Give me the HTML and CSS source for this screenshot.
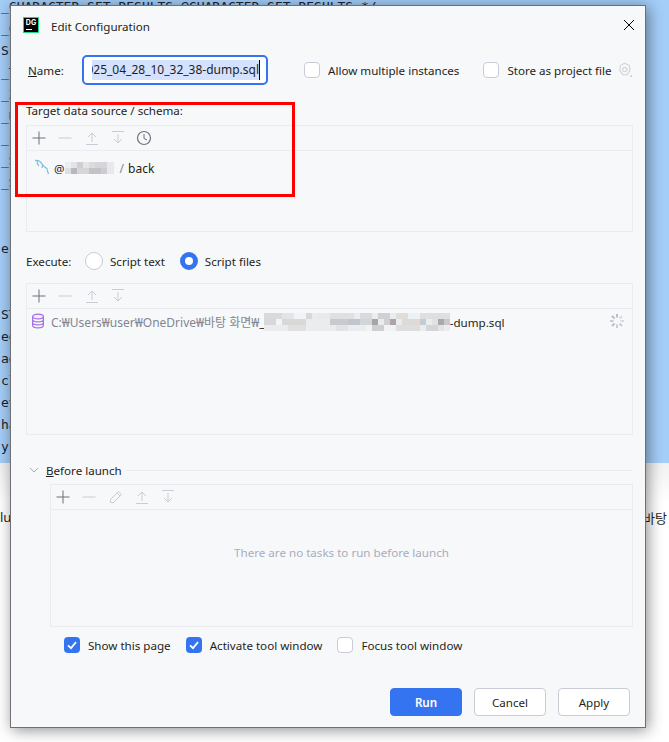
FILE: index.html
```html
<!DOCTYPE html>
<html lang="en">
<head>
<meta charset="utf-8">
<title>Edit Configuration</title>
<link rel="stylesheet" href="styles.css">
</head>
<body>
<svg class="defs" width="0" height="0" aria-hidden="true">
  <symbol id="i-plus" viewBox="0 0 16 16"><path d="M8 1.500v13M1.500 8h13" fill="none" stroke="#6c707e"/></symbol>
  <symbol id="i-minus" viewBox="0 0 16 16"><path d="M1.500 8h13" fill="none" stroke="#c9ccd6"/></symbol>
  <symbol id="i-up" viewBox="0 0 16 16"><path d="M8 12V3M4 7l4-4 4 4M2 14.500h12" fill="none" stroke="#c9ccd6"/></symbol>
  <symbol id="i-down" viewBox="0 0 16 16"><path d="M8 4v9M4 9l4 4 4-4M2 1.500h12" fill="none" stroke="#c9ccd6"/></symbol>
  <symbol id="i-clock" viewBox="0 0 16 16"><circle cx="8" cy="8" r="6.500" fill="none" stroke="#6c707e" stroke-width="1.200"/><path d="M8 4v4.500l3 1.500" fill="none" stroke="#6c707e"/></symbol>
  <symbol id="i-pencil" viewBox="0 0 16 16"><path d="M2.500 10.500l8-8 3 3-8 8h-3zM9 4l3 3" fill="none" stroke="#c9ccd6"/></symbol>
  <symbol id="i-check" viewBox="0 0 16 16"><path d="M4 8.300l3 2.900 5-6" fill="none" stroke="#fff" stroke-width="1.800"/></symbol>
</svg>

<div class="desktop">
  <div class="code">
    <div>_CHARACTER_SET_RESULTS @CHARACTER_SET_RESULTS */;</div>
    <div>_C</div>
    <div>S</div>
    <div>_T</div>
    <div>_Z</div>
    <div>_U</div>
    <div>_F</div>
    <div>_S</div>
    <div>_S</div>
    <div>&nbsp;</div>
    <div>&nbsp;</div>
    <div>e</div>
    <div>&nbsp;</div>
    <div>&nbsp;</div>
    <div>ST</div>
    <div>ed</div>
    <div>ad</div>
    <div>cl</div>
    <div>ey</div>
    <div>ha</div>
    <div>y</div>
  </div>
  <div class="lower">
    <span>lu</span>
    <span>바탕</span>
  </div>
</div>

<section class="dialog">
  <header class="titlebar">
    <div class="logo"><span class="logo-text">DG</span><span class="logo-bar"></span></div>
    <span class="title">Edit Configuration</span>
    <svg class="close" width="12" height="12" viewBox="0 0 12 12"><path d="M1 1l10 10M11 1L1 11" fill="none" stroke="#000"/></svg>
  </header>

  <div class="form">
    <div class="name-row">
      <span class="name-label"><u>N</u>ame:</span>
      <div class="name-input"><div class="name-clip"><span class="selected">2025_04_28_10_32_38-dump.sql</span></div></div>
      <label class="check allow"><span class="box"></span><span>Allow multiple instances</span></label>
      <label class="check store"><span class="box"></span><span>Store as project file</span></label>
      <svg class="gear" width="16" height="16" viewBox="0 0 16 16"><path d="M7.500 1.200l4.800 2.200.7 5-3 4.500H6L2.800 8.500l.6-5z" fill="none" stroke="#d3d5db" stroke-width="1.200"/><circle cx="7.800" cy="7.500" r="2.200" fill="none" stroke="#d3d5db" stroke-width="1.200"/><path d="M15 12.500V15h-2.500z" fill="#c9ccd6"/></svg>
    </div>

    <div class="field-label">Target data source / schema:</div>
    <div class="panel panel-target">
      <div class="toolbar">
        <svg class="tool"><use href="#i-plus"/></svg>
        <svg class="tool"><use href="#i-minus"/></svg>
        <svg class="tool"><use href="#i-up"/></svg>
        <svg class="tool"><use href="#i-down"/></svg>
        <svg class="tool"><use href="#i-clock"/></svg>
      </div>
      <div class="target-row">
        <svg class="dolphin" width="16" height="16" viewBox="0 0 16 16"><path d="M1 1.500c3-.8 5.500 1 7 3.500 1 1.800 3 3.500 5.500 5M3 2c0 2 .8 3.500 1.800 5M8.500 6l-.5 3M13 10.500l1.500 4.500" fill="none" stroke="#7fbcdb" stroke-width="1.200"/></svg>
        <span class="at">@</span>
        <svg class="mosaic-a" width="49" height="12" viewBox="0 0 49 12">
          <rect width="49" height="12" fill="#eceef1"/>
          <rect x="6" width="6" height="6" fill="#e2e3e6"/><rect x="12" width="6" height="6" fill="#cfcfd2"/><rect x="18" width="6" height="6" fill="#e5e5e7"/><rect x="24" width="6" height="6" fill="#dcdce0"/><rect x="30" width="12" height="6" fill="#d6d6da"/><rect x="42" width="7" height="6" fill="#e8e9ec"/>
          <rect x="0" y="6" width="6" height="6" fill="#dedfe2"/><rect x="6" y="6" width="6" height="6" fill="#b9b9bd"/><rect x="12" y="6" width="12" height="6" fill="#d6d6d8"/><rect x="24" y="6" width="12" height="6" fill="#c3c3c7"/><rect x="36" y="6" width="6" height="6" fill="#cdcdd0"/><rect x="42" y="6" width="7" height="6" fill="#e8e9ec"/>
        </svg>
        <span class="schema"><span class="slash">/</span> back</span>
      </div>
    </div>

    <div class="execute-row">
      <span class="execute-label">Execute:</span>
      <label class="radio"><span class="dot"></span><span>Script text</span></label>
      <label class="radio on"><span class="dot"></span><span>Script files</span></label>
    </div>

    <div class="panel panel-files">
      <div class="toolbar">
        <svg class="tool"><use href="#i-plus"/></svg>
        <svg class="tool"><use href="#i-minus"/></svg>
        <svg class="tool"><use href="#i-up"/></svg>
        <svg class="tool"><use href="#i-down"/></svg>
      </div>
      <div class="file-row">
        <svg class="db" width="14" height="16" viewBox="0 0 14 16"><g fill="#f3ecff" stroke="#a571e6" stroke-width="1.200"><ellipse cx="7" cy="3.500" rx="5.400" ry="2.400"/><path fill="none" d="M1.600 3.500v9c0 1.300 2.400 2.400 5.400 2.400s5.400-1.100 5.400-2.400v-9M1.600 6.500c0 1.300 2.400 2.400 5.400 2.400s5.400-1.100 5.400-2.400M1.600 9.500c0 1.300 2.400 2.400 5.400 2.400s5.400-1.100 5.400-2.400"/></g></svg>
        <span class="path">C:₩Users₩user₩OneDrive₩바탕 화면₩</span><span class="under">_</span>
        <svg class="mosaic-b" width="186" height="18" viewBox="0 0 186 18">
          <rect width="186" height="18" fill="#ebecee"/>
          <rect width="18" height="6" fill="#dadadc"/><rect x="18" width="12" height="6" fill="#e1e4e9"/><rect x="30" width="12" height="6" fill="#f0f4f7"/><rect x="42" width="6" height="6" fill="#dad8d6"/><rect x="54" width="12" height="6" fill="#e7e9ec"/><rect x="66" width="24" height="6" fill="#dfe0e2"/><rect x="96" width="12" height="6" fill="#d8dae0"/><rect x="114" width="12" height="6" fill="#d0cfd3"/><rect x="132" width="12" height="6" fill="#e1ddda"/><rect x="144" width="12" height="6" fill="#eef1f4"/><rect x="156" width="30" height="6" fill="#dfdfe2"/>
          <rect y="6" width="12" height="6" fill="#d8d8da"/><rect x="12" y="6" width="6" height="6" fill="#f0f5f8"/><rect x="18" y="6" width="24" height="6" fill="#d8d8d6"/><rect x="66" y="6" width="18" height="6" fill="#c9cacd"/><rect x="84" y="6" width="12" height="6" fill="#c0c6cf"/><rect x="96" y="6" width="12" height="6" fill="#d2d5da"/><rect x="108" y="6" width="6" height="6" fill="#a4a6a9"/><rect x="120" y="6" width="6" height="6" fill="#d0cfd2"/><rect x="126" y="6" width="6" height="6" fill="#ada5a3"/><rect x="138" y="6" width="12" height="6" fill="#dbdbdb"/><rect x="150" y="6" width="6" height="6" fill="#e1d9d2"/><rect x="156" y="6" width="6" height="6" fill="#c5cbd5"/><rect x="168" y="6" width="6" height="6" fill="#e1e1e1"/><rect x="174" y="6" width="6" height="6" fill="#a8a8ab"/><rect x="180" y="6" width="6" height="6" fill="#c9c9cc"/>
          <rect x="24" y="12" width="18" height="6" fill="#e0e0e3"/><rect x="72" y="12" width="12" height="6" fill="#e3e3e6"/><rect x="102" y="12" width="6" height="6" fill="#f2f3f4"/><rect x="108" y="12" width="12" height="6" fill="#cfced1"/><rect x="120" y="12" width="12" height="6" fill="#f1f2f4"/><rect x="132" y="12" width="24" height="6" fill="#dedee1"/><rect x="162" y="12" width="12" height="6" fill="#d5d5d8"/><rect x="174" y="12" width="6" height="6" fill="#e3e3e6"/>
        </svg>
        <span class="dump">-dump.sql</span>
        <svg class="spinner" width="16" height="16" viewBox="0 0 16 16"><g fill="none" stroke-width="2"><path d="M8 1v3.500" stroke="#b9bcc9"/><path d="M13 3l-2.500 2.500" stroke="#d8dae2"/><path d="M15 8h-3.500" stroke="#d8dae2"/><path d="M13 13l-2.500-2.500" stroke="#c9ccd6"/><path d="M8 15v-3.500" stroke="#c9ccd6"/><path d="M3 13l2.500-2.500" stroke="#b9bcc9"/><path d="M1 8h3.500" stroke="#c9ccd6"/><path d="M3 3l2.500 2.500" stroke="#b9bcc9"/></g></svg>
      </div>
    </div>

    <div class="launch-row">
      <svg class="chevron" width="10" height="6" viewBox="0 0 10 6"><path d="M1 1l4 4 4-4" fill="none" stroke="#a8adbd"/></svg>
      <span class="launch-title"><u>B</u>efore launch</span>
      <span class="launch-line"></span>
    </div>

    <div class="panel panel-launch">
      <div class="toolbar">
        <svg class="tool"><use href="#i-plus"/></svg>
        <svg class="tool"><use href="#i-minus"/></svg>
        <svg class="tool"><use href="#i-pencil"/></svg>
        <svg class="tool"><use href="#i-up"/></svg>
        <svg class="tool"><use href="#i-down"/></svg>
      </div>
      <div class="empty">There are no tasks to run before launch</div>
    </div>

    <div class="options-row">
      <label class="check show"><span class="box checked"><svg width="16" height="16"><use href="#i-check"/></svg></span><span>Show this page</span></label>
      <label class="check activate"><span class="box checked"><svg width="16" height="16"><use href="#i-check"/></svg></span><span>Activate tool window</span></label>
      <label class="check"><span class="box"></span><span>Focus tool window</span></label>
    </div>

    <div class="buttons">
      <button class="btn primary">Run</button>
      <button class="btn">Cancel</button>
      <button class="btn">Apply</button>
    </div>
  </div>
</section>

<div class="callout"></div>
</body>
</html>
```
FILE: styles.css
```css
* { box-sizing: border-box; }
html, body { margin: 0; height: 100%; }
body {
  position: relative;
  width: 669px;
  height: 742px;
  overflow: hidden;
  background: #fff;
  font-family: "Noto Sans", "Noto Sans CJK KR", sans-serif;
  font-size: 11.6px;
  color: #1e1f22;
}
.defs { position: absolute; }

.desktop { height: 742px; }
.code {
  height: 463px;
  overflow: hidden;
  padding-left: 1px;
  background: #a4cdf8;
  font-family: "DejaVu Sans Mono", monospace;
  font-size: 13px;
  line-height: 22px;
  color: #1a2330;
  white-space: nowrap;
}
.code > div:first-child { margin-top: -4px; }
.lower {
  display: flex;
  justify-content: space-between;
  height: 279px;
  padding: 45px 2px 0 0;
  background: linear-gradient(#f1f1f2, #fff 40px);
  font-size: 13px;
}

.dialog {
  position: absolute;
  left: 10px;
  top: 5px;
  width: 636px;
  height: 723px;
  background: #f7f8fa;
  border: 1px solid #6e7076;
  box-shadow: 2px 2px 14px rgba(0, 0, 0, .45);
}

.callout {
  position: absolute;
  left: 15px;
  top: 102px;
  width: 280px;
  height: 95px;
  border: 3px solid #ff0000;
}

.titlebar {
  display: flex;
  align-items: center;
  height: 42px;
  padding: 0 10px 0 12px;
}
.logo {
  position: relative;
  width: 16px;
  height: 16px;
  margin-bottom: 4px;
  background: #000;
  border: 1px solid #21d789;
  display: flex;
  justify-content: center;
}
.logo-text {
  font: 700 7px/10px Inter, sans-serif;
  color: #fff;
}
.logo-bar {
  position: absolute;
  left: 2px;
  bottom: 2px;
  width: 6px;
  height: 1px;
  background: #fff;
}
.title { margin: 0 0 2px 12px; flex: 1; }
.close { flex: none; margin-bottom: 4px; }

.form { display: flex; flex-direction: column; padding: 0 12px 0 15px; }

.name-row { display: flex; align-items: center; height: 30px; margin-top: 7px; padding-left: 2px; }
.name-label { width: 54px; flex: none; }
.name-input {
  width: 186px;
  height: 30px;
  flex: none;
  padding: 3px 6px 3px 8px;
  background: #fff;
  border: 2px solid #3574f0;
  border-radius: 5px;
  font-size: 12px;
}
.name-clip {
  display: flex;
  justify-content: flex-end;
  overflow: hidden;
  height: 20px;
  line-height: 20px;
  white-space: nowrap;
}
.selected { flex: none; background: #d4e2ff; border-right: 1px solid #000; }

.check { display: flex; align-items: center; gap: 8px; flex: none; }
.box {
  display: block;
  width: 16px;
  height: 16px;
  flex: none;
  background: #fff;
  border: 1px solid #c9ccd6;
  border-radius: 4px;
}
.box.checked { background: #3574f0; border: 0; }
.box.checked svg { display: block; }
.allow { margin-left: 36px; }
.store { margin-left: 24px; }
.gear { margin-left: 5px; flex: none; }

.field-label { height: 16px; line-height: 16px; margin-top: 18px; }

.panel { display: flex; flex-direction: column; border: 1px solid #ebecf0; }
.panel-target { height: 107px; margin-top: 6px; }
.panel-files { height: 152px; margin-top: 12px; }
.panel-launch { height: 143px; margin: 4px 0 0 24px; }
.toolbar {
  display: flex;
  align-items: center;
  flex: none;
  gap: 10px;
  height: 25px;
  padding-left: 4px;
  border-bottom: 1px solid #ebecf0;
}
.tool { width: 16px; height: 16px; flex: none; }
.tool:nth-child(3) { margin-left: 1px; }

.target-row { display: flex; align-items: center; height: 34px; padding-left: 7px; }
.dolphin { flex: none; margin-bottom: 2px; }
.at { margin-left: 4px; }
.mosaic-a { margin-left: 1px; flex: none; }
.schema { margin-left: 5px; font-size: 12px; word-spacing: 1px; }
.slash { color: #818594; }

.execute-row { display: flex; align-items: center; height: 20px; margin-top: 19px; }
.execute-label { width: 59px; flex: none; }
.radio { display: flex; align-items: center; gap: 7px; margin-right: 15px; flex: none; }
.dot { width: 18px; height: 18px; flex: none; background: #fff; border: 1px solid #c9ccd6; border-radius: 50%; }
.radio.on .dot { background: #fff; border: 5px solid #3574f0; }

.file-row { display: flex; align-items: center; height: 26px; padding: 0 7px 0 4px; font-size: 12px; }
.db { flex: none; margin-bottom: 2px; }
.path { margin-left: 6px; color: #818594; }
.mosaic-b { flex: none; margin-left: -1px; }
.dump { flex: 1; font-size: 11.6px; }
.spinner { flex: none; margin-bottom: 2px; }

.launch-row { display: flex; align-items: center; height: 20px; margin-top: 25px; padding-left: 3px; }
.chevron { flex: none; }
.launch-title { margin-left: 7px; flex: none; }
.launch-line { flex: 1; height: 1px; margin-left: 4px; background: #ebecf0; }

.empty {
  flex: 1;
  display: flex;
  align-items: center;
  justify-content: center;
  padding-bottom: 32px;
  color: #a8adbd;
}

.options-row { display: flex; align-items: center; height: 20px; margin-top: 8px; padding-left: 38px; gap: 15px; }

.buttons { display: flex; justify-content: flex-end; gap: 12px; margin-top: 33px; padding-right: 3px; }
.btn {
  width: 72px;
  height: 28px;
  font: inherit;
  color: inherit;
  background: #fff;
  border: 1px solid #c9ccd6;
  border-radius: 4px;
}
.btn.primary { background: #3574f0; border-color: #3574f0; color: #fff; font-weight: 600; }
```
